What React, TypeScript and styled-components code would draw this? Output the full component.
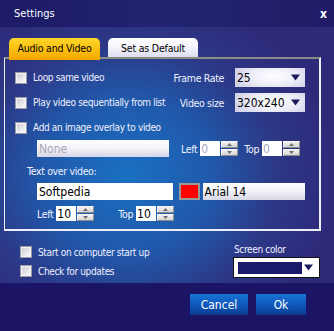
import styled, { createGlobalStyle } from "styled-components";

const GlobalStyle = createGlobalStyle`
  body {
    margin: 0;
    background: #1c1464;
  }
  * {
    box-sizing: border-box;
  }
`;

function DownArrow() {
  return (
    <svg width="9" height="7" viewBox="0 0 9 7">
      <path d="M0 0.5 H9 L4.5 6.5 Z" fill="#1c1c5c" />
    </svg>
  );
}

function Spinner() {
  return (
    <SpinBox>
      <SpinHalf>
        <svg width="5" height="3" viewBox="0 0 5 3">
          <path d="M0 3 H5 L2.5 0 Z" fill="#707070" />
        </svg>
      </SpinHalf>
      <SpinHalf>
        <svg width="5" height="3" viewBox="0 0 5 3">
          <path d="M0 0 H5 L2.5 3 Z" fill="#707070" />
        </svg>
      </SpinHalf>
    </SpinBox>
  );
}

function Check({ label }: { label: string }) {
  return (
    <CheckRow>
      <CheckBox />
      <span>{label}</span>
    </CheckRow>
  );
}

export default function App() {
  return (
    <Window>
      <GlobalStyle />
      <TitleBar>
        <span>Settings</span>
        <Close>x</Close>
      </TitleBar>
      <Body>
        <TabRow>
          <Tab $active>Audio and Video</Tab>
          <Tab>Set as Default</Tab>
        </TabRow>
        <Panel>
          <TopGrid>
            <Check label="Loop same video" />
            <FieldRow>
              <span>Frame Rate</span>
              <Select>
                <span>25</span>
                <DownArrow />
              </Select>
            </FieldRow>
            <Check label="Play video sequentially from list" />
            <FieldRow>
              <span>Video size</span>
              <Select>
                <span>320x240</span>
                <DownArrow />
              </Select>
            </FieldRow>
          </TopGrid>
          <OverlayCheck>
            <Check label="Add an image overlay to video" />
          </OverlayCheck>
          <InlineRow $top={3}>
            <TextBox $width={132} $disabled>
              None
            </TextBox>
            <SmallLabel $gap={12}>Left</SmallLabel>
            <NumberBox $disabled>0</NumberBox>
            <Spinner />
            <SmallLabel $gap={6}>Top</SmallLabel>
            <NumberBox $disabled>0</NumberBox>
            <Spinner />
          </InlineRow>
          <SectionLabel>Text over video:</SectionLabel>
          <InlineRow $top={6}>
            <TextBox $width={138} $plain>
              Softpedia
            </TextBox>
            <Swatch />
            <TextBox $width={104}>Arial 14</TextBox>
          </InlineRow>
          <InlineRow $top={6}>
            <SmallLabel $gap={0}>Left</SmallLabel>
            <NumberBox>10</NumberBox>
            <Spinner />
            <SmallLabel $gap={24}>Top</SmallLabel>
            <NumberBox>10</NumberBox>
            <Spinner />
          </InlineRow>
        </Panel>
        <BottomOptions>
          <CheckColumn>
            <Check label="Start on computer start up" />
            <Check label="Check for updates" />
          </CheckColumn>
          <ColorColumn>
            <span>Screen color</span>
            <ColorPicker>
              <ColorFill />
              <DownArrow />
            </ColorPicker>
          </ColorColumn>
        </BottomOptions>
      </Body>
      <Footer>
        <Button $width={58}>Cancel</Button>
        <Button $width={50}>Ok</Button>
      </Footer>
    </Window>
  );
}

const Window = styled.div`
  width: 334px;
  height: 331px;
  display: flex;
  flex-direction: column;
  overflow: hidden;
  font-family: "DejaVu Sans Condensed", "DejaVu Sans", sans-serif;
  font-size: 10px;
  letter-spacing: -0.35px;
  color: #f0f0ff;
  white-space: nowrap;
`;

const TitleBar = styled.div`
  height: 27px;
  flex-shrink: 0;
  display: flex;
  align-items: center;
  justify-content: space-between;
  padding: 0 7px 0 14px;
  background: linear-gradient(90deg, #1d1a66 0%, #232470 55%, #201b66 100%);
  color: #ffffff;
  font-size: 11px;
  letter-spacing: 0;
`;

const Close = styled.span`
  font-weight: bold;
  font-size: 12px;
`;

const Body = styled.div`
  flex: 1;
  display: flex;
  flex-direction: column;
  padding: 11px 13px 0 4px;
  background: radial-gradient(
    ellipse 62% 72% at 38% 58%,
    #1a70c2 0%,
    #2158aa 42%,
    #2c3886 72%,
    #2e2a7a 100%
  );
`;

const TabRow = styled.div`
  display: flex;
  align-items: flex-start;
  gap: 8px;
  padding-left: 5px;
  position: relative;
  z-index: 1;
  height: 22px;
`;

const Tab = styled.div<{ $active?: boolean }>`
  height: ${(p) => (p.$active ? 22 : 19)}px;
  width: ${(p) => (p.$active ? 91 : 90)}px;
  display: flex;
  justify-content: center;
  padding-top: 4px;
  border-radius: 5px 5px 0 0;
  color: #000000;
  font-size: 10.5px;
  letter-spacing: -0.2px;
  background: ${(p) =>
    p.$active
      ? "linear-gradient(#ffd629 0%, #fbbd0c 60%, #f2a400 100%)"
      : "linear-gradient(#ffffff 0%, #f4f4fb 50%, #dcdcee 100%)"};
`;

const Panel = styled.div`
  margin-top: -3px;
  height: 174px;
  border: 2px solid #eeeef6;
  border-top-color: #8c8c86;
  border-left-width: 1px;
  padding: 9px 14px 0 10px;
  display: flex;
  flex-direction: column;
`;

const TopGrid = styled.div`
  display: grid;
  grid-template-columns: minmax(0, 1fr) auto;
  grid-auto-rows: 19px;
  row-gap: 6px;
  align-items: center;
`;

const CheckRow = styled.div`
  display: flex;
  align-items: center;
  gap: 6px;
`;

const CheckBox = styled.div`
  width: 12px;
  height: 12px;
  flex-shrink: 0;
  border: 1px solid #9a9aa4;
  background: linear-gradient(135deg, #c8c8cc 0%, #eaeaee 60%, #fafafa 100%);
  box-shadow: inset 0 0 0 1px #f4f4f8;
`;

const FieldRow = styled.div`
  display: flex;
  align-items: center;
  justify-content: flex-end;
  gap: 11px;
  font-size: 10.5px;
`;

const Select = styled.div`
  width: 70px;
  height: 19px;
  display: flex;
  align-items: center;
  justify-content: space-between;
  padding: 0 5px 0 2px;
  color: #000000;
  font-size: 12px;
  letter-spacing: 0;
  background: radial-gradient(ellipse 60% 90% at 55% 45%, #ffffff 0%, #ececf8 55%, #d0d0e8 100%);
`;

const OverlayCheck = styled.div`
  margin-top: 6px;
  height: 19px;
  display: flex;
  align-items: center;
`;

const InlineRow = styled.div<{ $top: number }>`
  margin-top: ${(p) => p.$top}px;
  padding-left: 22px;
  display: flex;
  align-items: center;
`;

const TextBox = styled.div<{ $width: number; $disabled?: boolean; $plain?: boolean }>`
  width: ${(p) => p.$width}px;
  height: 17px;
  display: flex;
  align-items: center;
  padding-left: 2px;
  font-size: 12px;
  letter-spacing: 0;
  color: ${(p) => (p.$disabled ? "#a8a8b4" : "#000000")};
  background: ${(p) =>
    p.$plain
      ? "#ffffff"
      : "linear-gradient(#ffffff 0%, #f4f4fa 45%, #d6d6e6 100%)"};
`;

const SmallLabel = styled.span<{ $gap: number }>`
  margin-left: ${(p) => p.$gap}px;
  margin-right: 3px;
  font-size: 10.5px;
`;

const NumberBox = styled.div<{ $disabled?: boolean }>`
  width: 20px;
  height: 15px;
  display: flex;
  align-items: center;
  padding-left: 1px;
  font-size: 12px;
  letter-spacing: 0;
  background: #ffffff;
  color: ${(p) => (p.$disabled ? "#a8a8c0" : "#000000")};
  margin-right: 1px;
`;

const SpinBox = styled.div`
  width: 17px;
  height: 15px;
  display: flex;
  flex-direction: column;
  gap: 1px;
`;

const SpinHalf = styled.div`
  flex: 1;
  display: flex;
  align-items: center;
  justify-content: center;
  border: 1px solid #8c8c8c;
  border-top-color: #f4f4f4;
  border-left-color: #f4f4f4;
  background: linear-gradient(#f2f2f2, #d4d4d4);
`;

const SectionLabel = styled.div`
  margin-top: 8px;
  padding-left: 12px;
  font-size: 10.5px;
`;

const Swatch = styled.div`
  width: 21px;
  height: 17px;
  margin: 0 3px 0 6px;
  background: #ff0000;
  border: 2px solid #9a9a9a;
`;

const BottomOptions = styled.div`
  display: flex;
  justify-content: space-between;
  padding: 13px 0 0 16px;
`;

const CheckColumn = styled.div`
  display: flex;
  flex-direction: column;
  gap: 7px;
  padding-top: 2px;
`;

const ColorColumn = styled.div`
  display: flex;
  flex-direction: column;
  gap: 2px;
  padding-right: 1px;
  span {
    padding-left: 1px;
  }
`;

const ColorPicker = styled.div`
  width: 87px;
  height: 21px;
  display: flex;
  align-items: center;
  justify-content: space-between;
  padding: 0 6px 0 4px;
  background: #ffffff;
  border: 1px solid #111111;
`;

const ColorFill = styled.div`
  width: 64px;
  height: 12px;
  background: #1c1a6a;
`;

const Footer = styled.div`
  height: 48px;
  flex-shrink: 0;
  display: flex;
  justify-content: flex-end;
  align-items: flex-start;
  gap: 8px;
  padding: 11px 28px 0 0;
  background: #1c1464;
`;

const Button = styled.div<{ $width: number }>`
  width: ${(p) => p.$width}px;
  height: 21px;
  display: flex;
  align-items: center;
  justify-content: center;
  color: #ffffff;
  font-size: 12px;
  letter-spacing: 0;
  background: linear-gradient(#1a72d4 0%, #0f5cc0 45%, #0a48a4 80%, #0a3a8c 100%);
`;
